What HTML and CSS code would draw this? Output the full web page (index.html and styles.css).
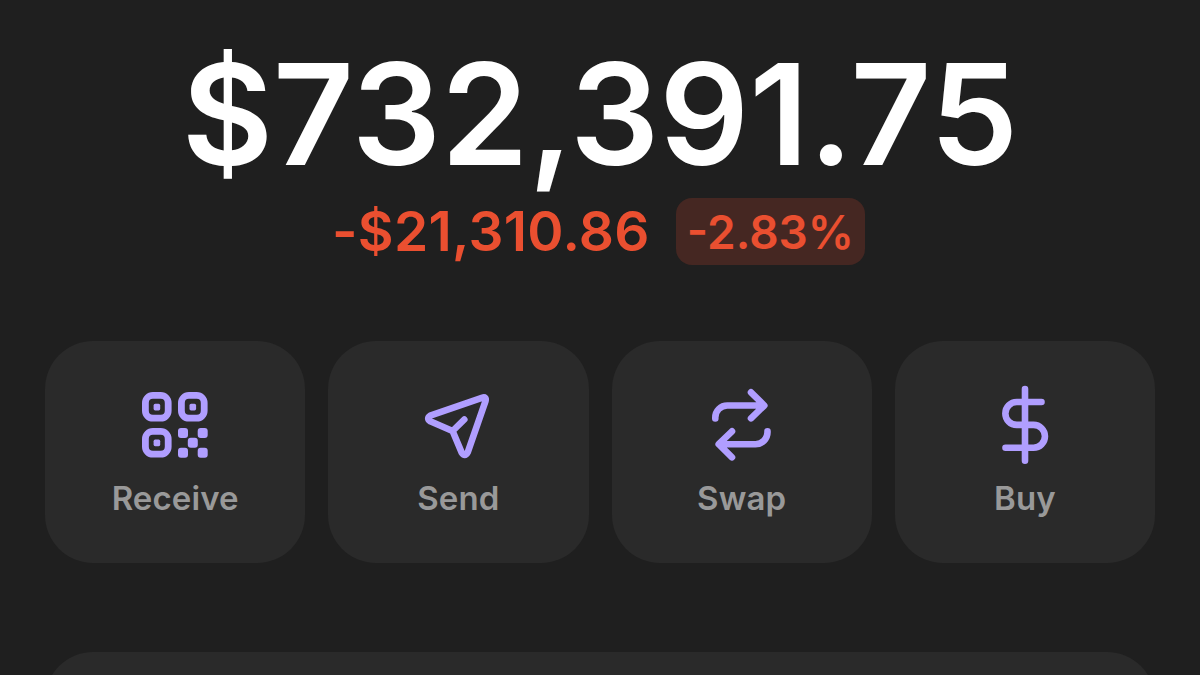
FILE: index.html
```html
<!DOCTYPE html>
<html lang="en">
<head>
    <meta charset="UTF-8">
    <meta name="viewport" content="width=device-width, initial-scale=1.0">
    <title>Wallet</title>
    <link rel="stylesheet" href="styles.css">
</head>
<body>
    <main class="wallet">
        <section class="balance">
            <h1 class="total">$732,391.75</h1>
            <div class="change">
                <span class="change-amount">-$21,310.86</span>
                <span class="change-percent">-2.83%</span>
            </div>
        </section>

        <nav class="actions">
            <button type="button" class="action">
                <svg class="icon" viewBox="0 0 90 90">
                    <g fill="none" stroke-width="6.8">
                        <rect x="15.4" y="15.4" width="22.8" height="22.8" rx="7.5"/>
                        <rect x="51.4" y="15.4" width="22.8" height="22.8" rx="7.5"/>
                        <rect x="15.4" y="51.4" width="22.8" height="22.8" rx="7.5"/>
                    </g>
                    <g class="solid">
                        <rect x="23.6" y="23.8" width="6.6" height="6.6" rx="1.6"/>
                        <rect x="59.5" y="23.8" width="6.6" height="6.6" rx="1.6"/>
                        <rect x="23.6" y="59.6" width="6.6" height="6.6" rx="1.6"/>
                        <rect x="48" y="48" width="10" height="10" rx="3"/>
                        <rect x="67.7" y="48" width="10" height="10" rx="3"/>
                        <rect x="57.8" y="57.8" width="10" height="10" rx="3"/>
                        <rect x="48" y="67.7" width="10" height="10" rx="3"/>
                        <rect x="67.7" y="67.7" width="10" height="10" rx="3"/>
                    </g>
                </svg>
                <span class="label">Receive</span>
            </button>
            <button type="button" class="action">
                <svg class="icon" viewBox="0 0 90 90">
                    <path d="M51.3 39.5L39.6 51M17.2 35.7L68.8 17.8Q73.8 16.2 72.5 21.2L54.8 72.2Q51.8 77.6 48.6 72.4L39.6 51L17.2 41.3Q13.2 38.5 17.2 35.7Z"/>
                </svg>
                <span class="label">Send</span>
            </button>
            <button type="button" class="action">
                <svg class="icon icon-swap" viewBox="0 0 90 90">
                    <path d="M19.3 38.5V37.5A12 12 0 0 1 31.3 25.5H68M55 12.3L68.3 25.5L55 38.3M71.5 51.3V52A12 12 0 0 1 59.5 64.2H23M36 51.3L22.7 64.2L36 77.3"/>
                </svg>
                <span class="label">Swap</span>
            </button>
            <button type="button" class="action">
                <svg class="icon" viewBox="0 0 90 90">
                    <path d="M45 9V80.7M61.5 22H36.8A11.4 11.4 0 0 0 36.8 44.9H53.5A11.4 11.4 0 0 1 53.5 67.8H25.5"/>
                </svg>
                <span class="label">Buy</span>
            </button>
        </nav>

        <section class="panel"></section>
    </main>
</body>
</html>
```
FILE: styles.css
```css
* {
    box-sizing: border-box;
}
body {
    margin: 0;
    background: #1f1f1f;
    font-family: Inter, "Liberation Sans", sans-serif;
    overflow: hidden;
}
.wallet {
    display: flex;
    flex-direction: column;
    height: 675px;
    padding: 38px 45px 0;
    overflow: hidden;
}
.balance {
    display: flex;
    flex-direction: column;
    flex-shrink: 0;
    align-items: center;
    height: 303px;
}
.total {
    margin: 0;
    color: #ffffff;
    font-size: 140.5px;
    font-weight: 600;
    line-height: 153px;
    height: 160px;
    white-space: nowrap;
}
.change {
    display: flex;
    align-items: center;
    gap: 26px;
    height: 67px;
    margin-right: 3px;
    color: #ea4f30;
    font-weight: 600;
    white-space: nowrap;
}
.change-amount {
    font-size: 55px;
    letter-spacing: 0.3px;
    line-height: 67px;
}
.change-percent {
    height: 67px;
    padding: 0 11px;
    border-radius: 16px;
    background: #452722;
    font-size: 46px;
    line-height: 69px;
}
.actions {
    display: grid;
    grid-template-columns: repeat(4, 1fr);
    flex-shrink: 0;
    gap: 23px;
    height: 222px;
}
.action {
    display: flex;
    flex-direction: column;
    align-items: center;
    justify-content: flex-start;
    padding: 39px 0 0;
    border: none;
    border-radius: 48px;
    background: #2a2a2a;
    color: #999999;
    font-family: inherit;
    cursor: pointer;
}
.icon {
    width: 90px;
    height: 90px;
    fill: none;
    stroke: #b09eff;
    stroke-width: 6.6;
    stroke-linecap: round;
    stroke-linejoin: round;
}
.icon-swap {
    margin-left: -2px;
}
.solid {
    fill: #b09eff;
    stroke: none;
}
.label {
    margin-top: 8px;
    font-size: 33px;
    font-weight: 600;
    letter-spacing: 0.1px;
    line-height: 40px;
}
.panel {
    flex-shrink: 0;
    height: 160px;
    margin-top: 89px;
    border-radius: 48px;
    background: #2a2a2a;
}
```
